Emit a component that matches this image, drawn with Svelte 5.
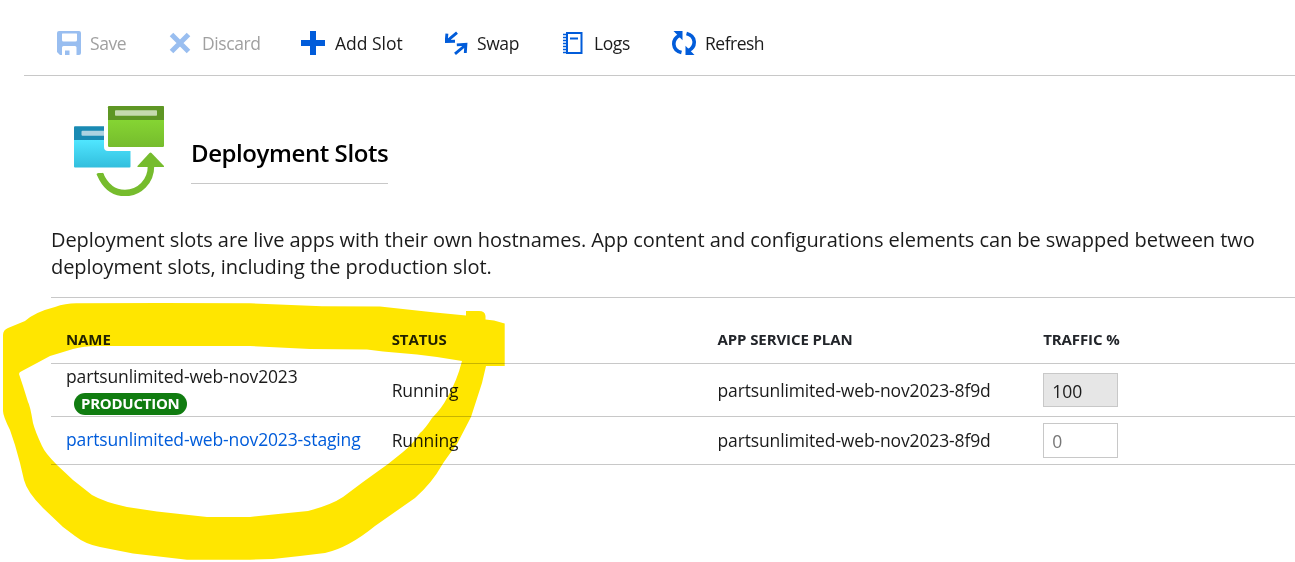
<script lang="ts">
  const slots = [
    { name: 'partsunlimited-web-nov2023', production: true, status: 'Running', plan: 'partsunlimited-web-nov2023-8f9d', traffic: '100' },
    { name: 'partsunlimited-web-nov2023-staging', production: false, status: 'Running', plan: 'partsunlimited-web-nov2023-8f9d', traffic: '0' }
  ];
</script>

<main>
  <nav class="toolbar">
    <button class="save" disabled>
      <svg width="24" height="24" viewBox="0 0 24 24"><path fill="currentColor" fill-rule="evenodd" d="M2 0h20a2 2 0 0 1 2 2v20a2 2 0 0 1-2 2h-2.500v-7.500a1.500 1.500 0 0 0-1.500-1.500H6.500A1.500 1.500 0 0 0 5 16.500V24H3l-3-3V2a2 2 0 0 1 2-2zm3 3v6a1.500 1.500 0 0 0 1.500 1.500h12A1.500 1.500 0 0 0 20 9V3q0-.5-.5-.5h-14Q5 2.500 5 3zM8 19.500h4.500V24H8z" /></svg>
      <span>Save</span>
    </button>
    <button class="discard" disabled>
      <svg width="22" height="22" viewBox="0 0 22 22"><path d="M2.500 2.500l17 17M19.500 2.500l-17 17" stroke="currentColor" stroke-width="5" /></svg>
      <span>Discard</span>
    </button>
    <button class="add">
      <svg width="24" height="24" viewBox="0 0 24 24"><path fill="currentColor" d="M9 0h6v9h9v6h-9v9H9v-9H0V9h9z" /></svg>
      <span>Add Slot</span>
    </button>
    <button class="swap">
      <svg width="24" height="24" viewBox="0 0 24 24"><g fill="none" stroke="currentColor" stroke-width="2.900"><path d="M12 1.600L2.200 9.800M1.900 2.600L1.200 10.500L10 10.200" /><path d="M10 22.800L20 14.500M11.800 13.900L20.900 13.300L20.300 22" /></g></svg>
      <span>Swap</span>
    </button>
    <button class="logs">
      <svg width="20" height="22" viewBox="0 0 20 22"><path d="M4 1h14.500v20H4z" fill="none" stroke="currentColor" stroke-width="2" /><path d="M0 2.500h3M0 5.500h3M0 8.500h3M0 11.500h3M0 14.500h3M0 17.500h3M0 20.500h3" stroke="currentColor" stroke-width="1.500" /><path d="M7 6.500h8" stroke="currentColor" stroke-width="2" /></svg>
      <span>Logs</span>
    </button>
    <button class="refresh">
      <svg width="24" height="24" viewBox="0 0 24 24"><g id="turn"><path fill="currentColor" d="M1.500 0H10.500V9.300z" /><path d="M7.500 4.300C-.5 8.500-.2 19 9.500 21.500" fill="none" stroke="currentColor" stroke-width="3.600" /></g><use href="#turn" transform="rotate(180 12 12)" /></svg>
      <span>Refresh</span>
    </button>
  </nav>

  <header>
    <svg class="emblem" width="90" height="90" viewBox="0 0 90 90">
      <defs>
        <linearGradient id="blue" x2="0" y2="1"><stop stop-color="#50e6ff" /><stop offset="1" stop-color="#32bedd" /></linearGradient>
        <linearGradient id="green" x2="0" y2="1"><stop offset=".3" stop-color="#86d633" /><stop offset="1" stop-color="#76bc2d" /></linearGradient>
      </defs>
      <path fill="url(#blue)" d="M0 34h30v7q0 4 4 4h22.500v15.500q0 1-1 1H1q-1 0-1-1z" />
      <path fill="#198ab3" d="M1 20.300h29V34H0V21.300q0-1 1-1z" />
      <path fill="#acd2e1" d="M8.500 24.700H30v5H8.500q-1 0-1-1v-3q0-1 1-1z" />
      <rect x="34" y="0" width="56" height="41" rx="1.200" fill="url(#green)" />
      <path fill="#5e9624" d="M35.200 0h53.600Q90 0 90 1.200V14H34V1.200Q34 0 35.200 0z" />
      <rect x="41" y="4.300" width="42" height="5.400" rx=".8" fill="#c5daae" />
      <path d="M26 68C32 82 41 87 51 87c14.500 0 26-11.500 26-27" fill="none" stroke="#76bc2d" stroke-width="6.500" />
      <path d="M22.500 68.500q0-1.500 2-1.500h3.500q1.500 0 2 2L27 73z" fill="#76bc2d" />
      <path d="M75.500 47q1-1 2 0l12.500 13q.5.800-.5 1H64q-1-.2-.5-1z" fill="#76bc2d" />
    </svg>
    <h1>Deployment Slots</h1>
  </header>

  <section class="intro">
    <p><span class="line">Deployment slots are live apps with their own hostnames. App content and configurations elements can be swapped between two</span> <span class="line">deployment slots, including the production slot.</span></p>
  </section>

  <div class="table">
    <div class="row head">
      <span>NAME</span><span>STATUS</span><span>APP SERVICE PLAN</span><span>TRAFFIC %</span>
    </div>
    {#each slots as slot}
      <div class="row" class:first={slot.production}>
        <div class="name">
          {#if slot.production}
            <span>{slot.name}</span>
            <b class="badge">PRODUCTION</b>
          {:else}
            <a href="#slot">{slot.name}</a>
          {/if}
        </div>
        <span class="status">{slot.status}</span>
        <span class="plan">{slot.plan}</span>
        <div class="traffic" class:locked={slot.production}>{slot.traffic}</div>
      </div>
    {/each}
  </div>

  <svg class="marker" width="1295" height="562" viewBox="0 0 1295 562">
    <path fill="#ffe600" fill-rule="evenodd" d="M3 335Q3 330 8 328L25 321Q35 312 55 307Q66 303 78 303.300L160 303L250 303.300L322 306.300L380 306.500L435 312.500L466 315.500V311H479Q485 311 485.500 316V319.500L494 320.500L504.700 323.500V366H486L482 383L471 417L457 444Q445 460 442 465Q432 483 415 498L375 526Q348 548 325 553L300 556L273 559L250 559.700H187L133 553.500L100 547Q85 544 75 536L63 527L43 508Q27 492 24 480L20 463L15 445L10 430Q3 416 3 411Z
      M19 374Q19 372 22 371L37 363L50 356Q60 353 73 349Q84 346 97 346H250L310 349L367 349.500L383 351.500L417 354.500L437 357L462 361Q457 381 447 398Q442 408 432 418Q425 429 420 433Q412 445 403 452L388 464L363 482L343 497Q331 505 308 511L283 513.500L250 517H207L157 511.500L127 507Q104 502 92 495L73 480L57 465Q45 453 42 446Q35 431 33 423Q30 405 28 402L23 386Z" />
  </svg>
</main>

<style>
  :global(body) { margin: 0; background: #fff; overflow: hidden; }
  main { position: relative; width: 1295px; height: 562px; overflow: hidden; isolation: isolate; background: #fff; color: #1b1b1b; font-family: "Open Sans", "Noto Sans", sans-serif; }
  span, a, b { white-space: nowrap; }
  .toolbar { display: flex; align-items: center; height: 64px; margin-left: 24px; padding: 11px 0 0 33px; box-sizing: content-box; border-bottom: 1px solid #c8c8c8; }
  button { display: flex; align-items: center; padding: 0; border: 0; background: none; color: #1b1b1b; font: 17.500px/24px "Open Sans", sans-serif; }
  button svg { display: block; flex: none; color: #015cda; }
  button:disabled { color: #a0a0a0; }
  button:disabled svg { color: #99bef0; }
  .save { width: 112px; gap: 9px; }
  .discard { width: 132px; gap: 11px; }
  .add { width: 144px; gap: 10px; }
  .swap { width: 118px; gap: 8px; }
  .logs { width: 109px; gap: 11px; }
  .refresh { gap: 9px; }
  button span { letter-spacing: -.4px; }
  .refresh span { letter-spacing: -.5px; }
  .add span { letter-spacing: 0; }
  header { display: flex; margin: 30px 0 0 74px; height: 90px; gap: 27px; }
  h1 { box-sizing: border-box; width: 197px; height: 48px; margin: 30px 0 0; border-bottom: 1px solid #c8c8c8; color: #000; font-size: 24px; line-height: 34px; font-weight: 600; letter-spacing: -.42px; white-space: nowrap; }
  .intro { margin: 30px 0 0 51px; height: 71px; border-bottom: 1px solid #c8c8c8; }
  .intro p { margin: 0; font-size: 20px; line-height: 27px; }
  .line { display: block; letter-spacing: -.06px; }
  .table { margin-left: 51px; font-size: 17.500px; }
  .row { display: grid; grid-template-columns: 325.700px 325.800px 325.700px 75px; align-items: center; box-sizing: border-box; height: 48px; padding-left: 15px; border-bottom: 1px solid #c8c8c8; }
  .row span, .row a { letter-spacing: -.14px; }
  .row .status, .row .plan, .row a { padding-bottom: 2px; }
  .row.first .status, .row.first .plan { padding-bottom: 1px; }
  .row.head { height: 66px; padding-top: 16px; font-size: 15px; font-weight: 700; color: #22252a; }
  .row.head span { letter-spacing: -.1px; }
  .first { height: 53px; }
  .name { display: flex; flex-direction: column; align-items: flex-start; line-height: 21px; }
  .badge { box-sizing: border-box; margin: 6px 0 0 8px; padding: 0 7px; height: 22px; border-radius: 11px; background: #107c10; color: #fff; font-size: 15px; line-height: 20px; letter-spacing: -.25px; }
  a { color: #015cda; text-decoration: none; }
  .traffic { box-sizing: border-box; width: 75px; height: 35px; padding-left: 8px; border: 1px solid #c8c8c8; line-height: 34px; color: #777; }
  .locked { background: #e6e6e6; height: 34px; color: #1b1b1b; }
  .marker { position: absolute; inset: 0; mix-blend-mode: multiply; pointer-events: none; }
</style>
